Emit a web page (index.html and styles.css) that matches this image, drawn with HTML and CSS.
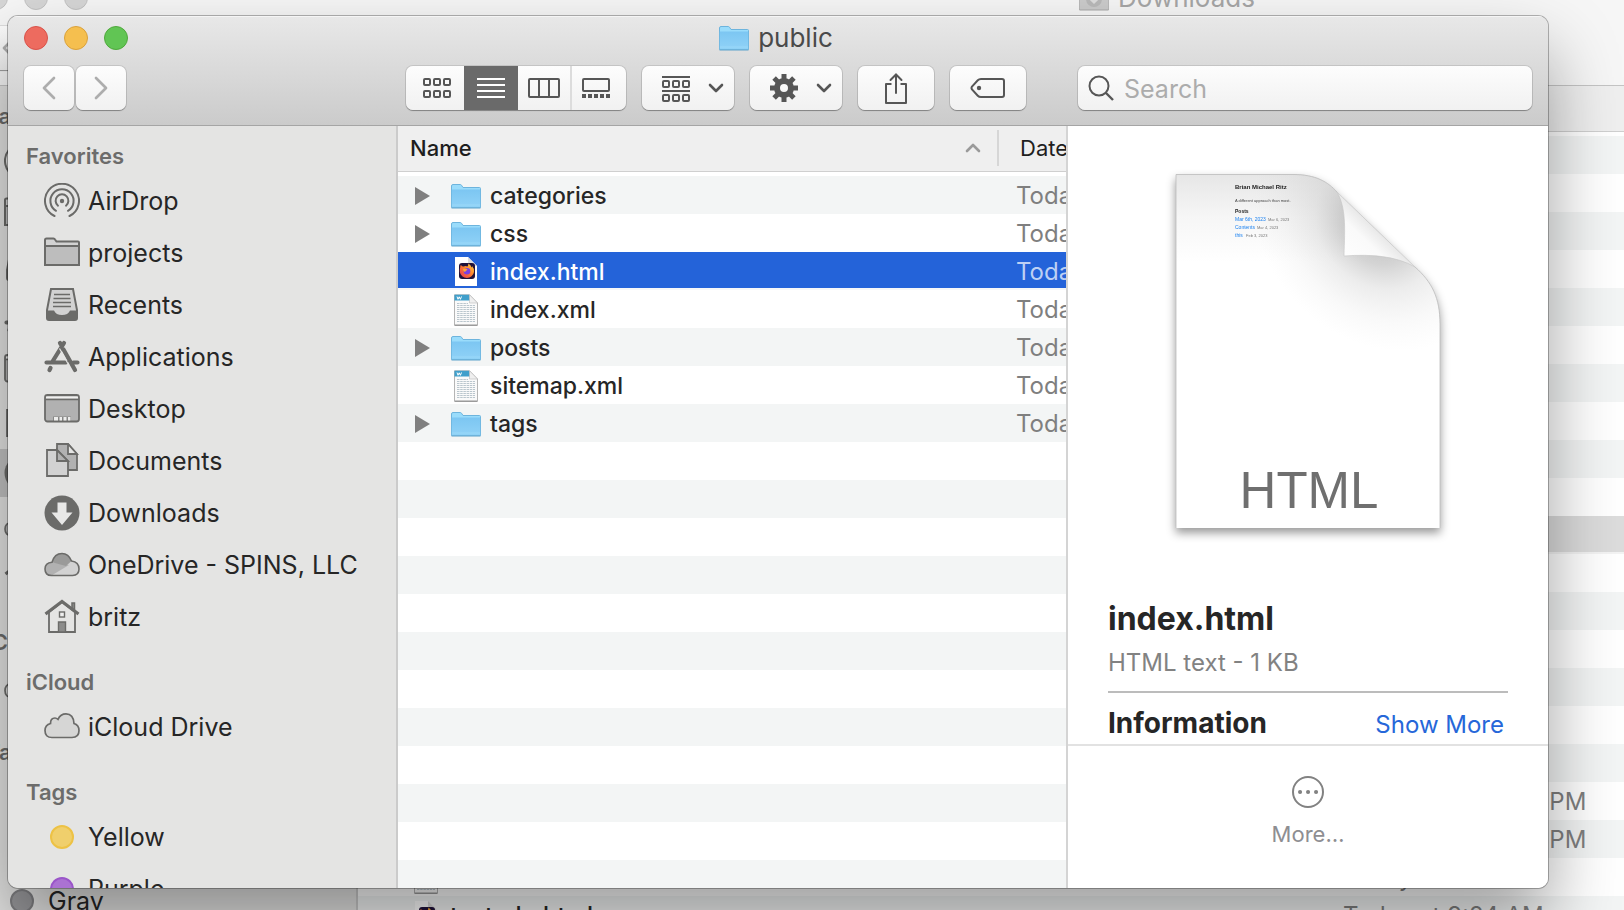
FILE: index.html
```
<!DOCTYPE html>
<html lang="en">
<head>
<meta charset="utf-8">
<title>public</title>
<link rel="stylesheet" href="styles.css">
</head>
<body>
<svg class="defs" aria-hidden="true">
  <defs>
    <linearGradient id="folder-fill" x1="0" y1="0" x2="0" y2="1"><stop offset="0" stop-color="#7cc6f2"/><stop offset="1" stop-color="#90d2f7"/></linearGradient>
    <linearGradient id="fox-fill" x1="1" y1="0" x2="0" y2="1"><stop offset="0" stop-color="#ffd83d"/><stop offset=".5" stop-color="#ff7a2e"/><stop offset="1" stop-color="#e5305c"/></linearGradient>
    <symbol id="i-folder" viewBox="0 0 30 25">
      <path d="M.5 2Q.5.5 2 .5H9.200Q10 .5 10.600 1.300L12 3.500H28.500Q29.500 3.500 29.500 4.500V23.500H.5Z" fill="#9adcfb" stroke="#6db4dd"/>
      <path d="M.8 5.500H29.200V23.500H.8Z" fill="url(#folder-fill)"/>
      <path d="M.5 24H29.500" stroke="#5fa3cb"/><path d="M1 21H29" stroke="#a5dffb" stroke-width=".6"/>
    </symbol>
    <symbol id="i-fox" viewBox="0 0 30 32">
      <path d="M4 1H17L26 10V30H4Z" fill="#fff"/><path d="M17 1V10H26Z" fill="#dcdcdc"/>
      <rect x="8" y="7" width="16" height="16" rx="3" fill="#20123a"/>
      <path d="M9.300 11Q9 9.500 10 9Q10.800 10.500 12.500 10.500Q14.500 9.500 16.500 10.500Q17.500 9.500 17.300 7.500Q20 9 20.500 11.500Q21 11 21 10Q23.500 12.500 23 16A7.200 7.200 0 0 1 8.800 16Q8.500 13 9.300 11Z" fill="url(#fox-fill)"/>
      <circle cx="16" cy="15.300" r="3.300" fill="#7b3fe0"/><path d="M12 13Q14.500 12 16.500 13.500L14.500 15.500Q13 16 12.500 15Z" fill="#ffa436"/>
    </symbol>
    <symbol id="i-xml" viewBox="0 0 30 32">
      <path d="M3.500.8H18.500L26.500 9V31H3.500Z" fill="#fafafa" stroke="#b5b5b5"/>
      <path d="M3.500.8H18.500L19 6.500H3.500Z" fill="#3f9fcb"/><path d="M18.500.8V9H26.500Z" fill="#efefef" stroke="#bbb" stroke-width=".6"/>
      <path d="M6 2.500L7 5.300L8.200 2.800L9.400 5.300L10.500 2.500" fill="none" stroke="#fff"/>
      <path d="M6 9.500H17M6 11.500H24M6 13.500H24M6 15.500H24M6 17.500H24M6 19.500H24M6 21.500H24M6 23.500H24M6 25.500H24M6 27.500H24" stroke="#a9b9c2" stroke-width=".8" stroke-dasharray="2.500 .7"/>
      <path d="M3.500 31.300H26.500" stroke="#8b8b8b"/>
    </symbol>
    <symbol id="i-airdrop" viewBox="0 0 36 36"><g fill="none" stroke="#6b6b69" stroke-width="2" stroke-linecap="round"><path d="M10.500 33A17 17 0 1 1 25.500 33"/><path d="M12 27.800A11.600 11.600 0 1 1 24 27.800"/><path d="M14 22.700A6.400 6.400 0 1 1 22 22.700"/></g><circle cx="18" cy="18" r="2.200" fill="#6b6b69"/></symbol>
    <symbol id="i-dir" viewBox="0 0 36 36"><path d="M1 5Q1 3.500 2.500 3.500H9.500Q10.500 3.500 11 4.500L12.500 6.500H34Q35 6.500 35 7.500V30H1Z" fill="#d2d2d2" stroke="#6b6b69" stroke-width="2"/><path d="M2 11H34V29H2Z" fill="#bdbdbd"/><path d="M1 11H35" stroke="#6b6b69" stroke-width="1.800"/></symbol>
    <symbol id="i-recents" viewBox="0 0 36 36"><path d="M7 2H29L33 23V31Q33 33 31 33H5Q3 33 3 31V23Z" fill="#d2d2d2" stroke="#6b6b69" stroke-width="2"/><path d="M10 7.500H26M9.500 11.500H26.500M9 15.500H27M9 19.500H27" stroke="#6b6b69" stroke-width="1.600"/><path d="M3 23.500H10Q12 28 18 28T26 23.500H33V33H3Z" fill="#6b6b69"/></symbol>
    <symbol id="i-apps" viewBox="0 0 36 36"><g stroke="#6b6b69" stroke-width="4.200" stroke-linecap="round"><path d="M20 4L8.500 22.500M16 4L18 7M2.500 23.500H22M29.500 23.500H33.500M6.500 29L5.500 31M19.500 10.500L31 31"/></g><path d="M15.500 9.500L25 26.500" stroke="#e4e4e3" stroke-width="1.200"/></symbol>
    <symbol id="i-desktop" viewBox="0 0 36 36"><rect x="1" y="4" width="34" height="26.500" rx="2.500" fill="#b1b1b1" stroke="#6b6b69" stroke-width="1.800"/><path d="M2 5.500H34V7.500H2Z" fill="#f0f0ef"/><path d="M1 8.500H35" stroke="#6b6b69" stroke-width="1.500"/><path d="M9 25.500H27V30H9Z" fill="#6b6b69" opacity=".6"/><path d="M10 26H14V29.500H10ZM15.500 26H18V29.500H15.500ZM19.500 26H22.500V29.500H19.500ZM24 26H26.500V29.500H24Z" fill="#ededec"/></symbol>
    <symbol id="i-docs" viewBox="0 0 36 36"><g stroke="#6b6b69" stroke-width="1.800"><path d="M13 1H24L33 11V27H13Z" fill="#b1b1b1"/><path d="M24 1V11H33Z" fill="#e4e4e3"/><path d="M3 7H13L24 18V33H3Z" fill="#d2d2d2"/><path d="M13 7V18H24Z" fill="#b1b1b1"/></g></symbol>
    <symbol id="i-down" viewBox="0 0 36 36"><circle cx="18" cy="18" r="17.500" fill="#6b6b69"/><path d="M13.500 7.500H22.500V17.500H28.500L18 30L7.500 17.500H13.500Z" fill="#e8e8e7"/></symbol>
    <symbol id="i-onedrive" viewBox="0 0 36 36"><path d="M7.500 28.500Q1 28.500 1 22Q1 16 8 15.300Q10.500 6.500 18 6.500Q24.500 6.500 27.500 14Q35 15 35 22Q35 28.500 28.500 28.500Z" fill="#d2d2d2"/><path d="M7.500 28.500Q1 28.500 1 22Q1 16 8 15.300L25 18Z" fill="#b1b1b1"/><path d="M8 15.300Q10.500 6.500 18 6.500Q24.500 6.500 27.500 14L22 19Z" fill="#9a9a99"/><path d="M7.500 28.500Q1 28.500 1 22Q1 16 8 15.300Q10.500 6.500 18 6.500Q24.500 6.500 27.500 14Q35 15 35 22Q35 28.500 28.500 28.500Z" fill="none" stroke="#6b6b69" stroke-width="1.600"/></symbol>
    <symbol id="i-home" viewBox="0 0 36 36"><path d="M28 4H30.500V11H28Z" fill="#8c8c8b" stroke="#6b6b69" stroke-width="1.500"/><path d="M5 13V33H31V13L18 3Z" fill="#e4e4e3" stroke="#6b6b69" stroke-width="1.800"/><path d="M1.500 15L18 2.500L34.500 15" fill="none" stroke="#6b6b69" stroke-width="3.200"/><rect x="15.500" y="13" width="5" height="5" fill="#eee" stroke="#6b6b69" stroke-width="1.400"/><path d="M14.500 23H21.500V33H14.500Z" fill="#8c8c8b" stroke="#6b6b69" stroke-width="1.400"/></symbol>
    <symbol id="i-cloud" viewBox="0 0 36 36"><path d="M8 28.500Q1 28.500 1 21.500Q1 16 6.500 14.500Q6.500 9 11 9Q12.500 9 14 10.300Q16.500 4.800 22 4.800Q29.500 4.800 30 14.500Q35 16 35 21.500Q35 28.500 28 28.500Z" fill="#d6d6d5" stroke="#6b6b69" stroke-width="1.700"/></symbol>
    <symbol id="i-back" viewBox="0 0 14 24"><path d="M12 2L2 12L12 22" fill="none" stroke="#adadad" stroke-width="2.700" stroke-linecap="round" stroke-linejoin="round"/></symbol>
    <symbol id="i-next" viewBox="0 0 14 24"><path d="M2 2L12 12L2 22" fill="none" stroke="#adadad" stroke-width="2.700" stroke-linecap="round" stroke-linejoin="round"/></symbol>
    <symbol id="i-caret" viewBox="0 0 16 10"><path d="M2 2L8 8L14 2" fill="none" stroke="#565656" stroke-width="2.600" stroke-linecap="round" stroke-linejoin="round"/></symbol>
    <symbol id="i-grid" viewBox="0 0 32 30"><g fill="none" stroke="#565656" stroke-width="2"><rect x="3" y="6" width="6" height="6" rx="1"/><rect x="13" y="6" width="6" height="6" rx="1"/><rect x="23" y="6" width="6" height="6" rx="1"/><rect x="3" y="18" width="6" height="6" rx="1"/><rect x="13" y="18" width="6" height="6" rx="1"/><rect x="23" y="18" width="6" height="6" rx="1"/></g></symbol>
    <symbol id="i-lines" viewBox="0 0 32 30"><path d="M2 6H30M2 12H30M2 18H30M2 24H30" stroke="#fff" stroke-width="2"/></symbol>
    <symbol id="i-cols" viewBox="0 0 32 30"><path d="M11 6V24M21 6V24" stroke="#565656" stroke-width="2"/><rect x="1" y="6" width="30" height="18" rx="1" fill="none" stroke="#565656" stroke-width="2"/></symbol>
    <symbol id="i-gallery" viewBox="0 0 32 30"><rect x="3" y="6" width="26" height="12" rx="1" fill="none" stroke="#565656" stroke-width="2"/><path d="M2 23H30" stroke="#565656" stroke-width="4" stroke-dasharray="4 2"/></symbol>
    <symbol id="i-group" viewBox="0 0 32 30"><g fill="none" stroke="#565656" stroke-width="2"><path d="M2 4H30M2 18H30"/><rect x="3" y="8" width="6" height="6" rx="1"/><rect x="13" y="8" width="6" height="6" rx="1"/><rect x="23" y="8" width="6" height="6" rx="1"/><rect x="3" y="22" width="6" height="6" rx="1"/><rect x="13" y="22" width="6" height="6" rx="1"/><rect x="23" y="22" width="6" height="6" rx="1"/></g></symbol>
    <symbol id="i-gear" viewBox="0 0 32 30"><circle cx="16" cy="15" r="7" fill="none" stroke="#565656" stroke-width="6"/><path d="M16 1V7M16 23V29M2 15H8M24 15H30M6.100 5.100L10.300 9.300M21.700 20.700L25.900 24.900M6.100 24.900L10.300 20.700M21.700 9.300L25.900 5.100" stroke="#565656" stroke-width="5"/></symbol>
    <symbol id="i-share" viewBox="0 0 32 32"><path d="M11.500 12H6V31H26V12H20.500" fill="none" stroke="#565656" stroke-width="2" stroke-linejoin="round"/><path d="M16 21V2.500M10.500 8L16 2.500L21.500 8" fill="none" stroke="#565656" stroke-width="2" stroke-linecap="round"/></symbol>
    <symbol id="i-tag" viewBox="0 0 36 30"><path d="M11 6H32Q34 6 34 8V22Q34 24 32 24H11Q9 24 7.800 22.700L2 16.500Q1 15 2 13.500L7.800 7.300Q9 6 11 6Z" fill="none" stroke="#565656" stroke-width="2"/><circle cx="9" cy="15" r="2.200" fill="#565656"/></symbol>
    <symbol id="i-search" viewBox="0 0 26 26"><circle cx="11" cy="11" r="9.500" fill="none" stroke="#565656" stroke-width="2"/><path d="M18 18L25 25" stroke="#565656" stroke-width="2.400"/></symbol>
    <symbol id="i-sort" viewBox="0 0 16 10"><path d="M2 8L8 2L14 8" fill="none" stroke="#9a9a9a" stroke-width="2.600" stroke-linecap="round" stroke-linejoin="round"/></symbol>
    <symbol id="i-more" viewBox="0 0 34 34"><circle cx="17" cy="17" r="15" fill="none" stroke="#828282" stroke-width="2"/><path d="M9 17h.1M17 17h.1M25 17h.1" stroke="#828282" stroke-width="4" stroke-linecap="round"/></symbol>
    <symbol id="i-tri" viewBox="0 0 15 18"><path d="M0 0L15 9L0 18Z" fill="#7f7f7f"/></symbol>
  </defs>
</svg>

<main class="desktop">
  <section class="window back" aria-label="Downloads">
    <header class="chrome">
      <div class="titlebar">
        <div class="lights"><button class="light" aria-label="Close"></button><button class="light" aria-label="Minimize"></button><button class="light" aria-label="Zoom"></button></div>
        <h1 class="title"><svg width="30" height="25"><rect y="1" width="30" height="23" rx="1" fill="#cbcbcb" stroke="#a8a8a8"/><circle cx="15" cy="13" r="8" fill="#b9b9b9"/><path d="M11 12L15 16L19 12" fill="none" stroke="#dedede" stroke-width="3"/></svg>Downloads</h1>
      </div>
      <div class="toolbar">
        <div class="nav"><button class="btn" aria-label="Back"><svg width="14" height="24"><use href="#i-back"/></svg></button><button class="btn" aria-label="Forward"><svg width="14" height="24"><use href="#i-next"/></svg></button></div>
      </div>
    </header>
    <div class="panes">
      <nav class="sidebar">
        <h2>Favorites</h2>
        <a href="#" aria-label="AirDrop"><svg class="ic"><use href="#i-airdrop"/></svg></a>
        <a href="#" aria-label="projects"><svg class="ic"><use href="#i-dir"/></svg></a>
        <a href="#" aria-label="Recents"><svg class="ic"><use href="#i-recents"/></svg></a>
        <a href="#" aria-label="Applications"><svg class="ic"><use href="#i-apps"/></svg></a>
        <a href="#" aria-label="Desktop"><svg class="ic"><use href="#i-desktop"/></svg></a>
        <a href="#" aria-label="Documents"><svg class="ic"><use href="#i-docs"/></svg></a>
        <a href="#" aria-label="Downloads" class="current"><svg class="ic"><use href="#i-down"/></svg></a>
        <a href="#" aria-label="OneDrive"><svg class="ic"><use href="#i-onedrive"/></svg></a>
        <a href="#" aria-label="britz"><svg class="ic"><use href="#i-home"/></svg></a>
        <h2>iCloud</h2>
        <a href="#" aria-label="iCloud Drive"><svg class="ic"><use href="#i-cloud"/></svg></a>
        <h2>Tags</h2>
        <a href="#" aria-label="Yellow"><span class="dot yellow"></span></a>
        <a href="#" aria-label="Purple"><span class="dot purple"></span></a>
        <a href="#"><span class="dot gray"></span>Gray</a>
      </nav>
      <div class="list">
        <table>
          <colgroup><col class="c-wide"><col></colgroup>
          <thead><tr><th></th><th></th></tr></thead>
          <tbody>
            <tr><td></td><td></td></tr><tr><td></td><td></td></tr><tr><td></td><td></td></tr><tr><td></td><td></td></tr><tr><td></td><td></td></tr>
            <tr><td></td><td></td></tr><tr><td></td><td></td></tr><tr><td></td><td></td></tr><tr><td></td><td></td></tr><tr><td></td><td></td></tr>
            <tr class="picked"><td></td><td></td></tr>
            <tr><td></td><td></td></tr><tr><td></td><td></td></tr><tr><td></td><td></td></tr><tr><td></td><td></td></tr><tr><td></td><td></td></tr><tr><td></td><td></td></tr>
            <tr><td></td><td>Yesterday at 3:48 PM</td></tr>
            <tr><td></td><td>Yesterday at 3:48 PM</td></tr>
            <tr><td><span class="file"><i class="slot"></i><svg class="doc"><use href="#i-xml"/></svg></span></td><td>Today at 9:24 AM</td></tr>
            <tr><td><span class="file"><i class="slot"></i><svg class="doc"><use href="#i-fox"/></svg>testade.html</span></td><td>Today at 9:24 AM</td></tr>
          </tbody>
        </table>
      </div>
    </div>
  </section>

  <section class="window front" aria-label="public">
    <header class="chrome">
      <div class="titlebar">
        <div class="lights"><button class="light red" aria-label="Close"></button><button class="light amber" aria-label="Minimize"></button><button class="light green" aria-label="Zoom"></button></div>
        <h1 class="title"><svg width="30" height="25"><use href="#i-folder"/></svg>public</h1>
      </div>
      <div class="toolbar">
        <div class="nav"><button class="btn" aria-label="Back"><svg width="14" height="24"><use href="#i-back"/></svg></button><button class="btn" aria-label="Forward"><svg width="14" height="24"><use href="#i-next"/></svg></button></div>
        <div class="spring"></div>
        <div class="tools">
          <div class="segments">
            <button class="seg-icons" aria-label="Icon view"><svg class="tool"><use href="#i-grid"/></svg></button>
            <button class="seg-list" aria-label="List view" aria-pressed="true"><svg class="tool"><use href="#i-lines"/></svg></button>
            <button class="seg-columns" aria-label="Column view"><svg class="tool"><use href="#i-cols"/></svg></button>
            <button class="seg-gallery" aria-label="Gallery view"><svg class="tool"><use href="#i-gallery"/></svg></button>
          </div>
          <button class="btn menu" aria-label="Group"><svg class="tool"><use href="#i-group"/></svg><svg class="caret"><use href="#i-caret"/></svg></button>
          <button class="btn menu" aria-label="Actions"><svg class="tool"><use href="#i-gear"/></svg><svg class="caret"><use href="#i-caret"/></svg></button>
          <button class="btn single" aria-label="Share"><svg width="32" height="32"><use href="#i-share"/></svg></button>
          <button class="btn single" aria-label="Edit tags"><svg width="36" height="30"><use href="#i-tag"/></svg></button>
        </div>
        <label class="search"><svg width="26" height="26"><use href="#i-search"/></svg><input type="search" placeholder="Search" aria-label="Search"></label>
      </div>
    </header>
    <div class="panes">
      <nav class="sidebar">
        <h2>Favorites</h2>
        <a href="#"><svg class="ic"><use href="#i-airdrop"/></svg>AirDrop</a>
        <a href="#"><svg class="ic"><use href="#i-dir"/></svg>projects</a>
        <a href="#"><svg class="ic"><use href="#i-recents"/></svg>Recents</a>
        <a href="#"><svg class="ic"><use href="#i-apps"/></svg>Applications</a>
        <a href="#"><svg class="ic"><use href="#i-desktop"/></svg>Desktop</a>
        <a href="#"><svg class="ic"><use href="#i-docs"/></svg>Documents</a>
        <a href="#"><svg class="ic"><use href="#i-down"/></svg>Downloads</a>
        <a href="#"><svg class="ic"><use href="#i-onedrive"/></svg>OneDrive - SPINS, LLC</a>
        <a href="#"><svg class="ic"><use href="#i-home"/></svg>britz</a>
        <h2>iCloud</h2>
        <a href="#"><svg class="ic"><use href="#i-cloud"/></svg>iCloud Drive</a>
        <h2>Tags</h2>
        <a href="#"><span class="dot yellow"></span>Yellow</a>
        <a href="#"><span class="dot purple"></span>Purple</a>
      </nav>
      <div class="list">
        <table>
          <colgroup><col class="c-name"><col></colgroup>
          <thead><tr><th class="sorted"><span class="head">Name<svg width="16" height="10"><use href="#i-sort"/></svg></span></th><th>Date Modified</th></tr></thead>
          <tbody>
            <tr><td><span class="file"><i class="slot"><svg class="tri"><use href="#i-tri"/></svg></i><svg class="fold"><use href="#i-folder"/></svg>categories</span></td><td>Today at 9:31 AM</td></tr>
            <tr><td><span class="file"><i class="slot"><svg class="tri"><use href="#i-tri"/></svg></i><svg class="fold"><use href="#i-folder"/></svg>css</span></td><td>Today at 9:31 AM</td></tr>
            <tr class="selected"><td><span class="file"><i class="slot"></i><svg class="doc"><use href="#i-fox"/></svg>index.html</span></td><td>Today at 9:31 AM</td></tr>
            <tr><td><span class="file"><i class="slot"></i><svg class="doc"><use href="#i-xml"/></svg>index.xml</span></td><td>Today at 9:31 AM</td></tr>
            <tr><td><span class="file"><i class="slot"><svg class="tri"><use href="#i-tri"/></svg></i><svg class="fold"><use href="#i-folder"/></svg>posts</span></td><td>Today at 9:31 AM</td></tr>
            <tr><td><span class="file"><i class="slot"></i><svg class="doc"><use href="#i-xml"/></svg>sitemap.xml</span></td><td>Today at 9:31 AM</td></tr>
            <tr><td><span class="file"><i class="slot"><svg class="tri"><use href="#i-tri"/></svg></i><svg class="fold"><use href="#i-folder"/></svg>tags</span></td><td>Today at 9:31 AM</td></tr>
          </tbody>
        </table>
      </div>
      <aside class="preview">
        <div class="details">
          <svg class="page" viewBox="0 0 264 354" role="img" aria-label="index.html preview">
            <defs>
              <linearGradient id="g-top" x1="0" y1="0" x2="0" y2="1"><stop offset="0" stop-color="#e6e6e6"/><stop offset=".12" stop-color="#f6f6f6"/><stop offset=".25" stop-color="#fff"/></linearGradient>
              <radialGradient id="g-fold" gradientUnits="userSpaceOnUse" cx="0" cy="0" r="1" gradientTransform="translate(200 54) rotate(45) scale(135 110)"><stop offset="0" stop-color="#888" stop-opacity=".6"/><stop offset=".3" stop-color="#999" stop-opacity=".42"/><stop offset=".5" stop-color="#aaa" stop-opacity=".22"/><stop offset=".75" stop-color="#bbb" stop-opacity=".09"/><stop offset="1" stop-color="#ccc" stop-opacity="0"/></radialGradient>
              <linearGradient id="g-flap" x1="0" y1="1" x2=".6" y2=".4"><stop offset="0" stop-color="#fff"/><stop offset=".6" stop-color="#fafafa"/><stop offset="1" stop-color="#dcdcdc"/></linearGradient>
            </defs>
            <path d="M0 0H117C140 0 152 8 161 18L239 93C256 108 264 124 264 150V354H0Z" fill="url(#g-top)"/>
            <path d="M0 0H117C140 0 152 8 161 18L239 93C256 108 264 124 264 150V354H0Z" fill="url(#g-fold)"/>
            <path d="M161 18C170 34 169 52 168 82C196 80 220 82 239 93Z" fill="url(#g-flap)" stroke="#c4c4c4" stroke-width=".6"/>
            <path d="M239 93C256 108 264 124 264 150V354M0 354V.5H117C140 .5 152 8 161 18" fill="none" stroke="#bdbdbd" stroke-width=".8"/>
            <text class="mini m-title" x="59" y="15">Brian Michael Ritz</text>
            <text class="mini m-small" x="59" y="28">A different approach than most.</text>
            <text class="mini m-head" x="59" y="39">Posts</text>
            <text class="mini m-link" x="59" y="47">Mar 6th, 2023</text><text class="mini m-date" x="92" y="47">Mar 6, 2023</text>
            <text class="mini m-link" x="59" y="55">Contents</text><text class="mini m-date" x="81" y="55">Mar 4, 2023</text>
            <text class="mini m-link" x="59" y="63">this</text><text class="mini m-date" x="70" y="63">Feb 3, 2023</text>
            <text class="kind-label" x="133" y="334" text-anchor="middle">HTML</text>
          </svg>
          <h2 class="name">index.html</h2>
          <p class="kind">HTML text - 1 KB</p>
          <div class="info"><h3>Information</h3><a href="#">Show More</a></div>
        </div>
        <div class="actions"><button><svg width="34" height="34"><use href="#i-more"/></svg>More…</button></div>
      </aside>
    </div>
  </section>
</main>
</body>
</html>
```

FILE: styles.css
```
* { box-sizing: border-box; }
body { margin: 0; font-family: Inter, "Liberation Sans", sans-serif; color: #262626; }
button, input { font: inherit; color: inherit; margin: 0; }
button { border: 0; padding: 0; background: none; }
h1, h2, h3, p { margin: 0; }
a { color: inherit; text-decoration: none; }
svg { display: block; flex: none; }
.defs { position: absolute; width: 0; height: 0; }

.desktop { position: relative; height: 100vh; overflow: hidden; background: #f6f6f6; }
.window { position: absolute; display: flex; flex-direction: column; border-radius: 10px; overflow: hidden; }
.back { top: -24px; left: -32px; right: -746px; bottom: -60px; }
.front {
  top: 16px; left: 8px; right: 76px; bottom: 22px;
  box-shadow: 0 0 0 1px rgba(0, 0, 0, .28), 0 36px 70px rgba(0, 0, 0, .38);
}

.chrome { flex: none; background: linear-gradient(#e8e8e8, #cbcbcb); border-bottom: 1px solid #a5a5a5; box-shadow: inset 0 1px 0 #f5f5f5; }
.back .chrome { background: #f6f6f6; border-color: #c4c4c4; }
.titlebar { display: grid; grid-template-columns: 1fr auto 1fr; align-items: center; height: 44px; padding: 0 20px 0 16px; }
.lights { display: flex; gap: 16px; }
.light { width: 24px; height: 24px; border-radius: 50%; background: #d6d6d6; border: 1px solid #c2c2c2; }
.red { background: #ed6b5f; border-color: #d8524a; }
.amber { background: #f5bf4f; border-color: #d9a13c; }
.green { background: #61c554; border-color: #4fa83c; }
.title { display: flex; align-items: center; gap: 9px; font-size: 26px; line-height: 32px; font-weight: 400; color: #4a4a4a; }
.back .title { color: #a6a6a6; }

.toolbar { display: flex; align-items: center; padding: 6px 16px 15px; }
.nav { display: flex; gap: 2px; }
.btn, .segments, .search {
  height: 44px; border-radius: 7px; background: linear-gradient(#fdfdfd, #f1f1f1);
  box-shadow: 0 0 0 1px rgba(0, 0, 0, .1), 0 1px 1px rgba(0, 0, 0, .3);
}
.btn { display: flex; align-items: center; justify-content: center; }
.nav .btn { width: 50px; }
.spring { flex: 0 1 280px; }
.tools { display: flex; gap: 16px; }
.segments { display: flex; overflow: hidden; }
.segments button { display: flex; align-items: center; justify-content: center; }
.seg-icons { width: 58px; padding-left: 4px; }
.segments .seg-list { width: 54px; background: #6a6a6a; }
.seg-columns { width: 52px; }
.segments .seg-gallery { width: 56px; padding-right: 6px; border-left: 2px solid #dcdcdc; }
.tool { width: 32px; height: 30px; }
.caret { width: 16px; height: 10px; }
.menu { width: 92px; gap: 16px; padding-left: 8px; }
.single { width: 76px; }
.search { display: flex; flex: 1; align-items: center; gap: 10px; margin-left: 52px; padding: 0 10px; color: #565656; }
.search input { flex: 1; min-width: 0; border: 0; outline: 0; padding: 2px 0 0; background: none; font-size: 25px; line-height: 32px; }
.search input::placeholder { color: #acacac; opacity: 1; }

.panes { display: flex; flex: 1; min-height: 0; }
.sidebar { flex: none; width: 390px; overflow: hidden; background: #e4e4e3; border-right: 2px solid #cbcbcb; }
.sidebar h2 { padding: 20px 0 0 18px; font-size: 22px; line-height: 38px; font-weight: 600; color: #6c6c6b; }
.sidebar h2:first-child { padding-top: 11px; }
.sidebar a { display: flex; align-items: center; gap: 8px; height: 52px; padding-left: 36px; font-size: 25px; line-height: 32px; }
.sidebar .current { height: 48px; margin: 2px 0; background: #c2c2c2; }
.ic { width: 36px; height: 36px; }
.dot { flex: none; width: 24px; height: 24px; margin: 0 6px; border-radius: 50%; }
.yellow { background: #f0cf6c; border: 2px solid #edc245; }
.purple { background: #ab72d2; border: 2px solid #9a55c9; }
.gray { background: #98989b; border: 2px solid #7f7f82; }

.list { flex: 1; min-width: 0; overflow: hidden; background: repeating-linear-gradient(#f3f5f5 0 38px, #fff 38px 76px) 0 50px; }
.back .list { background-color: #fff; }
table { width: 100%; table-layout: fixed; border-collapse: separate; border-spacing: 0; }
.c-name { width: 601px; }
.c-wide { width: 973px; }
th {
  height: 50px; padding: 0 0 6px 21px; text-align: left; white-space: nowrap;
  font-size: 22px; line-height: 28px; font-weight: 400; color: #1e1e1e;
  background: linear-gradient(#efefef 45px, #cfcfcf 45px 46px, #fff 46px);
}
.sorted { padding-left: 12px; font-weight: 500; }
.head { display: flex; align-items: center; justify-content: space-between; height: 36px; padding-right: 16px; border-right: 2px solid #d6d6d6; }
td { height: 38px; padding: 2px 0 0 17px; overflow: hidden; white-space: nowrap; font-size: 24px; line-height: 30px; color: #7f7f7f; }
td:first-child { padding-left: 17px; color: #262626; }
.back td { padding-left: 12px; }
.back td:first-child { padding-left: 17px; }
.file { display: flex; align-items: center; font-size: 23px; font-weight: 500; }
.slot { flex: none; width: 36px; }
.tri { width: 15px; height: 18px; }
.fold { width: 30px; height: 25px; margin-right: 9px; }
.doc { width: 30px; height: 32px; margin-right: 9px; }
.back .file { font-size: 24px; }
.selected td { background: linear-gradient(#2463d9 36px, #f6f7f9 36px); color: #bdd0f4; }
.selected td:first-child { color: #fff; }
.picked td { background: linear-gradient(#dcdcdc 36px, #f3f3f3 36px); }

.preview { display: flex; flex: none; flex-direction: column; width: 482px; background: #fff; border-left: 2px solid #d4d4d4; }
.details { flex: 1; min-height: 0; overflow: hidden; padding: 48px 40px 0; }
.page { width: 264px; height: 354px; margin: 0 auto; overflow: visible; filter: drop-shadow(0 5px 5px rgba(0, 0, 0, .4)); }
.mini { font-family: "Liberation Sans", sans-serif; }
.m-title { font-size: 6px; font-weight: 700; fill: #222; }
.m-small { font-size: 4px; fill: #444; }
.m-head { font-size: 5px; font-weight: 700; fill: #222; }
.m-link { font-size: 5px; fill: #1a80f0; }
.m-date { font-size: 4px; fill: #777; }
.kind-label { font-family: "Liberation Sans", sans-serif; font-size: 51px; fill: #6f6f6f; }
.name { margin-top: 71px; font-size: 32px; line-height: 40px; font-weight: 700; }
.kind { padding: 8px 0 12px; border-bottom: 2px solid #bcbcbc; font-size: 24px; line-height: 32px; color: #828282; }
.info { display: flex; align-items: baseline; justify-content: space-between; padding: 12px 4px 0 0; }
.info h3 { font-size: 28px; line-height: 36px; font-weight: 700; }
.info a { font-size: 24px; line-height: 32px; color: #2667d9; }
.actions { display: flex; flex: none; justify-content: center; height: 144px; padding-top: 29px; border-top: 2px solid #e2e2e2; align-items: flex-start; }
.actions button { display: flex; flex-direction: column; align-items: center; gap: 11px; font-size: 22px; line-height: 28px; color: #8e8e92; }
```
